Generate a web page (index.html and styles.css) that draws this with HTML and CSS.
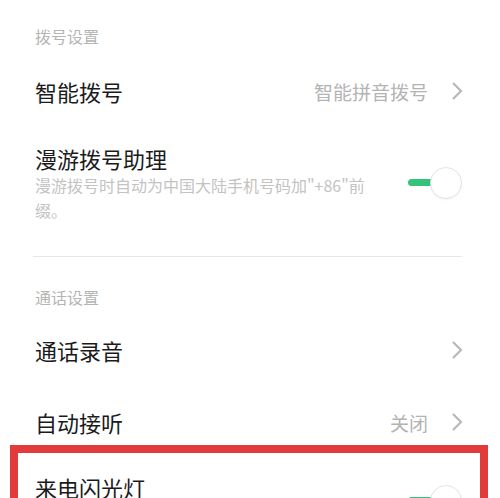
FILE: index.html
```html
<!DOCTYPE html>
<html lang="zh-CN">
<head>
    <meta charset="UTF-8">
    <meta name="viewport" content="width=device-width, initial-scale=1.0">
    <title>通话设置</title>
    <link rel="stylesheet" href="styles.css">
</head>
<body>
    <div class="page">
        <div class="section-title first">拨号设置</div>

        <div class="row">
            <span class="row-title">智能拨号</span>
            <span class="row-value">智能拼音拨号</span>
            <svg class="chevron" viewBox="0 0 12 22"><polyline points="2,3 10,11 2,19"/></svg>
        </div>

        <div class="row tall">
            <div class="row-text">
                <div class="row-title">漫游拨号助理</div>
                <div class="row-desc">漫游拨号时自动为中国大陆手机号码加"+86"前缀。</div>
            </div>
            <div class="switch on"><span class="track"></span><span class="knob"></span></div>
        </div>

        <div class="divider"></div>

        <div class="section-title">通话设置</div>

        <div class="row">
            <span class="row-title">通话录音</span>
            <svg class="chevron" viewBox="0 0 12 22"><polyline points="2,3 10,11 2,19"/></svg>
        </div>

        <div class="row">
            <span class="row-title">自动接听</span>
            <span class="row-value">关闭</span>
            <svg class="chevron" viewBox="0 0 12 22"><polyline points="2,3 10,11 2,19"/></svg>
        </div>

        <div class="row last">
            <div class="row-text">
                <div class="row-title">来电闪光灯</div>
            </div>
            <div class="switch on"><span class="track"></span><span class="knob"></span></div>
        </div>

        <!-- 红色标注框 -->
        <div class="highlight"></div>
    </div>
</body>
</html>
```

FILE: styles.css
```css
body {
    margin: 0;
    background-color: #ffffff;
    font-family: "Noto Sans CJK SC", "Noto Sans", sans-serif;
    overflow: hidden;
}
.page {
    position: relative;
    height: 498px;
    overflow: hidden;
}
.section-title {
    font-size: 16px;
    line-height: 20px;
    color: #b5b5b5;
    padding: 30px 35px 7px;
}
.section-title.first {
    padding-top: 26px;
    padding-bottom: 9px;
}
.row {
    display: flex;
    align-items: center;
    height: 72px;
    padding: 0 37px 0 35px;
}
.row-title {
    font-size: 22px;
    line-height: 30px;
    color: #1b1b1b;
    flex: 1;
}
.row-value {
    font-size: 19px;
    color: #b3b3b3;
    margin-right: 23px;
}
.chevron {
    width: 12px;
    height: 22px;
    fill: none;
    stroke: #b8b8b8;
    stroke-width: 2.2;
}
.row.tall {
    height: auto;
    padding-top: 16px;
    padding-bottom: 33px;
}
.row-text {
    flex: 1;
}
.row-desc {
    max-width: 342px;
    font-size: 16px;
    line-height: 25px;
    color: #c3c3c3;
}
.row.last {
    height: 86px;
    align-items: flex-start;
    padding-top: 14px;
    box-sizing: border-box;
}
.row.last .switch {
    margin-top: 13px;
}
.divider {
    height: 1px;
    background-color: #e6e6e6;
    margin: 0 38px 0 33px;
}
.switch {
    position: relative;
    width: 54px;
    height: 32px;
    flex-shrink: 0;
    margin-right: 1px;
}
.switch .track {
    position: absolute;
    left: 0;
    top: 12px;
    width: 34px;
    height: 7px;
    border-radius: 4px;
    background-color: #35c27a;
}
.switch .knob {
    position: absolute;
    right: 0;
    top: 0;
    width: 30px;
    height: 30px;
    border-radius: 50%;
    background-color: #ffffff;
    border: 1px solid #e4e4e4;
    box-shadow: 0 1px 2px rgba(0,0,0,0.05);
}
.highlight {
    position: absolute;
    left: 10px;
    top: 445px;
    width: 462px;
    height: 120px;
    border: 8px solid #e23b3b;
}
```
